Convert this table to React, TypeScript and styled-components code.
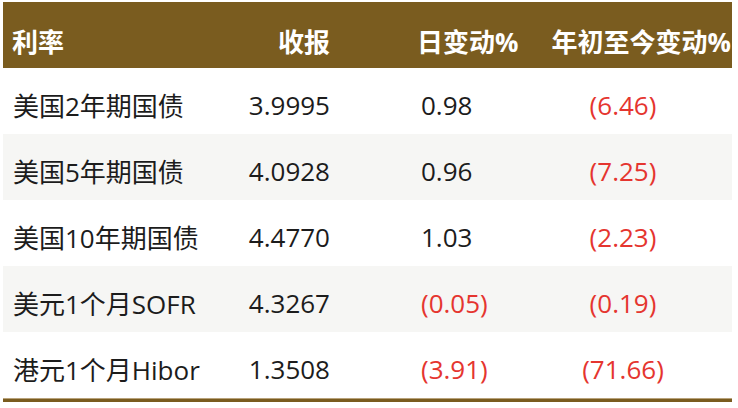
import styled, { createGlobalStyle } from "styled-components";

type Align = "left" | "right" | "center";

interface RateRow {
    name: string;
    close: string;
    day: string;
    ytd: string;
}

const rows: RateRow[] = [
    { name: "美国2年期国债", close: "3.9995", day: "0.98", ytd: "(6.46)" },
    { name: "美国5年期国债", close: "4.0928", day: "0.96", ytd: "(7.25)" },
    { name: "美国10年期国债", close: "4.4770", day: "1.03", ytd: "(2.23)" },
    { name: "美元1个月SOFR", close: "4.3267", day: "(0.05)", ytd: "(0.19)" },
    { name: "港元1个月Hibor", close: "1.3508", day: "(3.91)", ytd: "(71.66)" },
];

const isNeg = (v: string) => v.startsWith("(");

const App = () => {
    return (
        <>
            <GlobalStyle />
            <Table>
                <HeadRow>
                    <HeadCell align="left" pad="0 0 0 9px">利率</HeadCell>
                    <HeadCell align="right" pad="0 3px 0 0">收报</HeadCell>
                    <HeadCell align="left" pad="0 0 0 84px">日变动%</HeadCell>
                    <HeadCell align="right" pad="0 1px 0 0">年初至今变动%</HeadCell>
                </HeadRow>
                {rows.map((r, i) => (
                    <BodyRow key={r.name} shaded={i % 2 === 1}>
                        <Cell align="left" pad="0 0 0 10px">{r.name}</Cell>
                        <Cell align="right" pad="0 3px 0 0">{r.close}</Cell>
                        <Cell align="left" pad="0 0 0 88px" neg={isNeg(r.day)}>{r.day}</Cell>
                        <Cell align="center" pad="0 9px 0 0" neg={isNeg(r.ytd)}>{r.ytd}</Cell>
                    </BodyRow>
                ))}
                <BottomRule />
            </Table>
        </>
    );
};

const GlobalStyle = createGlobalStyle`
    html, body {
        margin: 0;
        padding: 0;
        background: #ffffff;
    }
    body {
        font-family: "Open Sans", "Noto Sans CJK SC", sans-serif;
    }
`;

const Table = styled.div`
    width: 729px;
    margin: 2px 0 0 3px;
    display: flex;
    flex-direction: column;
`;

const columns = "200px 130px 190px 1fr";

const HeadRow = styled.div`
    display: grid;
    grid-template-columns: ${columns};
    height: 66px;
    padding-top: 11px;
    box-sizing: border-box;
    align-items: center;
    background: #7a5c1f;
`;

const HeadCell = styled.div<{ align: Align; pad: string }>`
    text-align: ${(p) => p.align};
    padding: ${(p) => p.pad};
    color: #ffffff;
    font-size: 26px;
    font-weight: 700;
    white-space: nowrap;
`;

const BodyRow = styled.div<{ shaded: boolean }>`
    display: grid;
    grid-template-columns: ${columns};
    height: 66px;
    padding-top: 8px;
    box-sizing: border-box;
    align-items: center;
    background: ${(p) => (p.shaded ? "#f6f6f4" : "#ffffff")};
`;

const Cell = styled.div<{ align: Align; pad: string; neg?: boolean }>`
    text-align: ${(p) => p.align};
    padding: ${(p) => p.pad};
    color: ${(p) => (p.neg ? "#e5352f" : "#1c1c1c")};
    font-size: 26px;
    white-space: nowrap;
`;

const BottomRule = styled.div`
    height: 4px;
    background: #7a5c1f;
    border-top: 1px solid #b8a27a;
    box-sizing: border-box;
`;

export default App;
